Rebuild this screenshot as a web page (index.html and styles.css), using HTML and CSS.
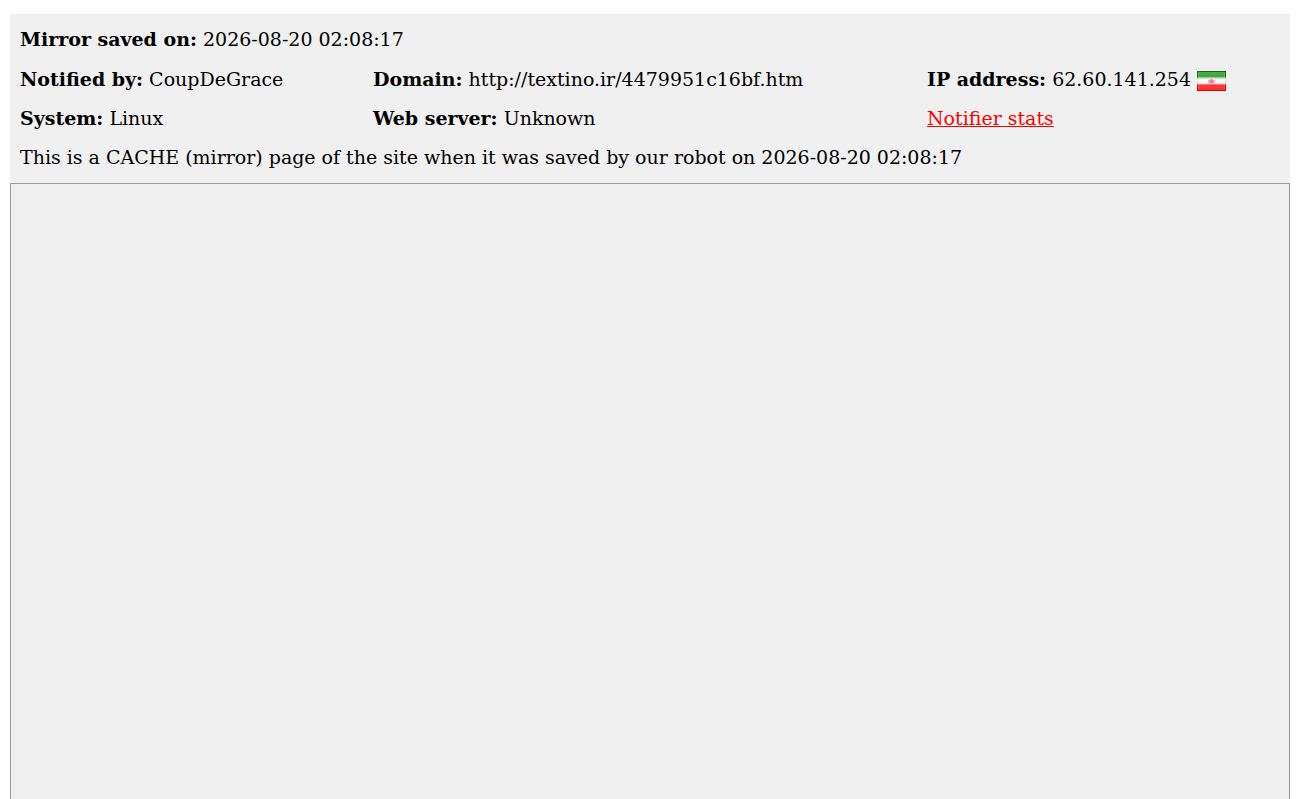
FILE: index.html
```
<!DOCTYPE html>
<html lang="en">
<head>
	<meta charset="UTF-8">
	<title>Mirror saved on: 2026-08-20 02:08:17</title>
	<link rel="stylesheet" href="styles.css">
</head>
<body>

<div class="mirror">
	<ul class="info">
		<li class="full"><strong>Mirror saved on:</strong> 2026-08-20 02:08:17</li>
		<li><strong>Notified by:</strong> CoupDeGrace</li>
		<li><strong>Domain:</strong> http://textino.ir/4479951c16bf.htm</li>
		<li><strong>IP address:</strong> 62.60.141.254
			<svg class="flag" viewBox="0 0 29 20">
				<defs>
					<linearGradient id="stripes" x1="0" y1="0" x2="0" y2="1">
						<stop offset="0" stop-color="#1f861f"/>
						<stop offset="0.14" stop-color="#4fae4f"/>
						<stop offset="0.26" stop-color="#359b35"/>
						<stop offset="0.36" stop-color="#c4e4c4"/>
						<stop offset="0.44" stop-color="#ffffff"/>
						<stop offset="0.62" stop-color="#fdf4f4"/>
						<stop offset="0.7" stop-color="#ff3434"/>
						<stop offset="0.84" stop-color="#ff3a3a"/>
						<stop offset="1" stop-color="#ee0606"/>
					</linearGradient>
					<linearGradient id="edge" x1="0" y1="0" x2="0" y2="1">
						<stop offset="0" stop-color="#0d6a0d"/>
						<stop offset="0.28" stop-color="#137313"/>
						<stop offset="0.4" stop-color="#e6e6e6"/>
						<stop offset="0.6" stop-color="#e6dede"/>
						<stop offset="0.72" stop-color="#f00808"/>
						<stop offset="1" stop-color="#d80000"/>
					</linearGradient>
				</defs>
				<rect width="29" height="20" fill="url(#stripes)"/>
				<rect x="1.5" y="1.5" width="26" height="17" fill="none" stroke="#fff" stroke-opacity="0.12"/>
				<rect x="0.5" y="0.5" width="28" height="19" fill="none" stroke="url(#edge)"/>
				<path d="M10.5 8.5l2.5.3L14.5 7 16 8.8l2.5-.3-1 2 .8 1.5-2 .3-1.8 1.5-1.8-1.5-2-.3.8-1.5z" fill="#f8a4a4"/>
				<circle cx="14.5" cy="10.5" r="1.4" fill="#f47c7c"/>
			</svg>
		</li>
		<li><strong>System:</strong> Linux</li>
		<li><strong>Web server:</strong> Unknown</li>
		<li><a href="#">Notifier stats</a></li>
		<li class="full">This is a CACHE (mirror) page of the site when it was saved by our robot on 2026-08-20 02:08:17</li>
	</ul>
	<div class="frame"></div>
</div>

</body>
</html>
```

FILE: styles.css
```
*{margin: 0;padding: 0;}
ul{list-style: none;}
body{
	background: #fff;
	color: #000;
	font-family: "DejaVu Serif", serif;
	font-size: 18.99px;
	overflow: hidden;
}
/*外部盒子*/
.mirror{
	display: flex;
	flex-direction: column;
	box-sizing: border-box;
	height: 100vh;
	padding: 14px 10px 0;
}
.info{
	display: grid;
	grid-template-columns: 353px 554px 1fr;
	grid-template-rows: 40px 39px 39px 39px;
	height: 163px;
	padding: 6px 0 0 10px;
	background: #f0f0f0;
	line-height: 39px;
	white-space: nowrap;
}
.info .full{
	grid-column: 1 / 4;
}
.info a{
	color: #f00;
}
.flag{
	width: 29px;
	height: 20px;
	vertical-align: -5px;
}
.frame{
	flex: 1;
	border: 1px solid #999;
	border-bottom: 0;
	background: #f0f0f0;
}
```
